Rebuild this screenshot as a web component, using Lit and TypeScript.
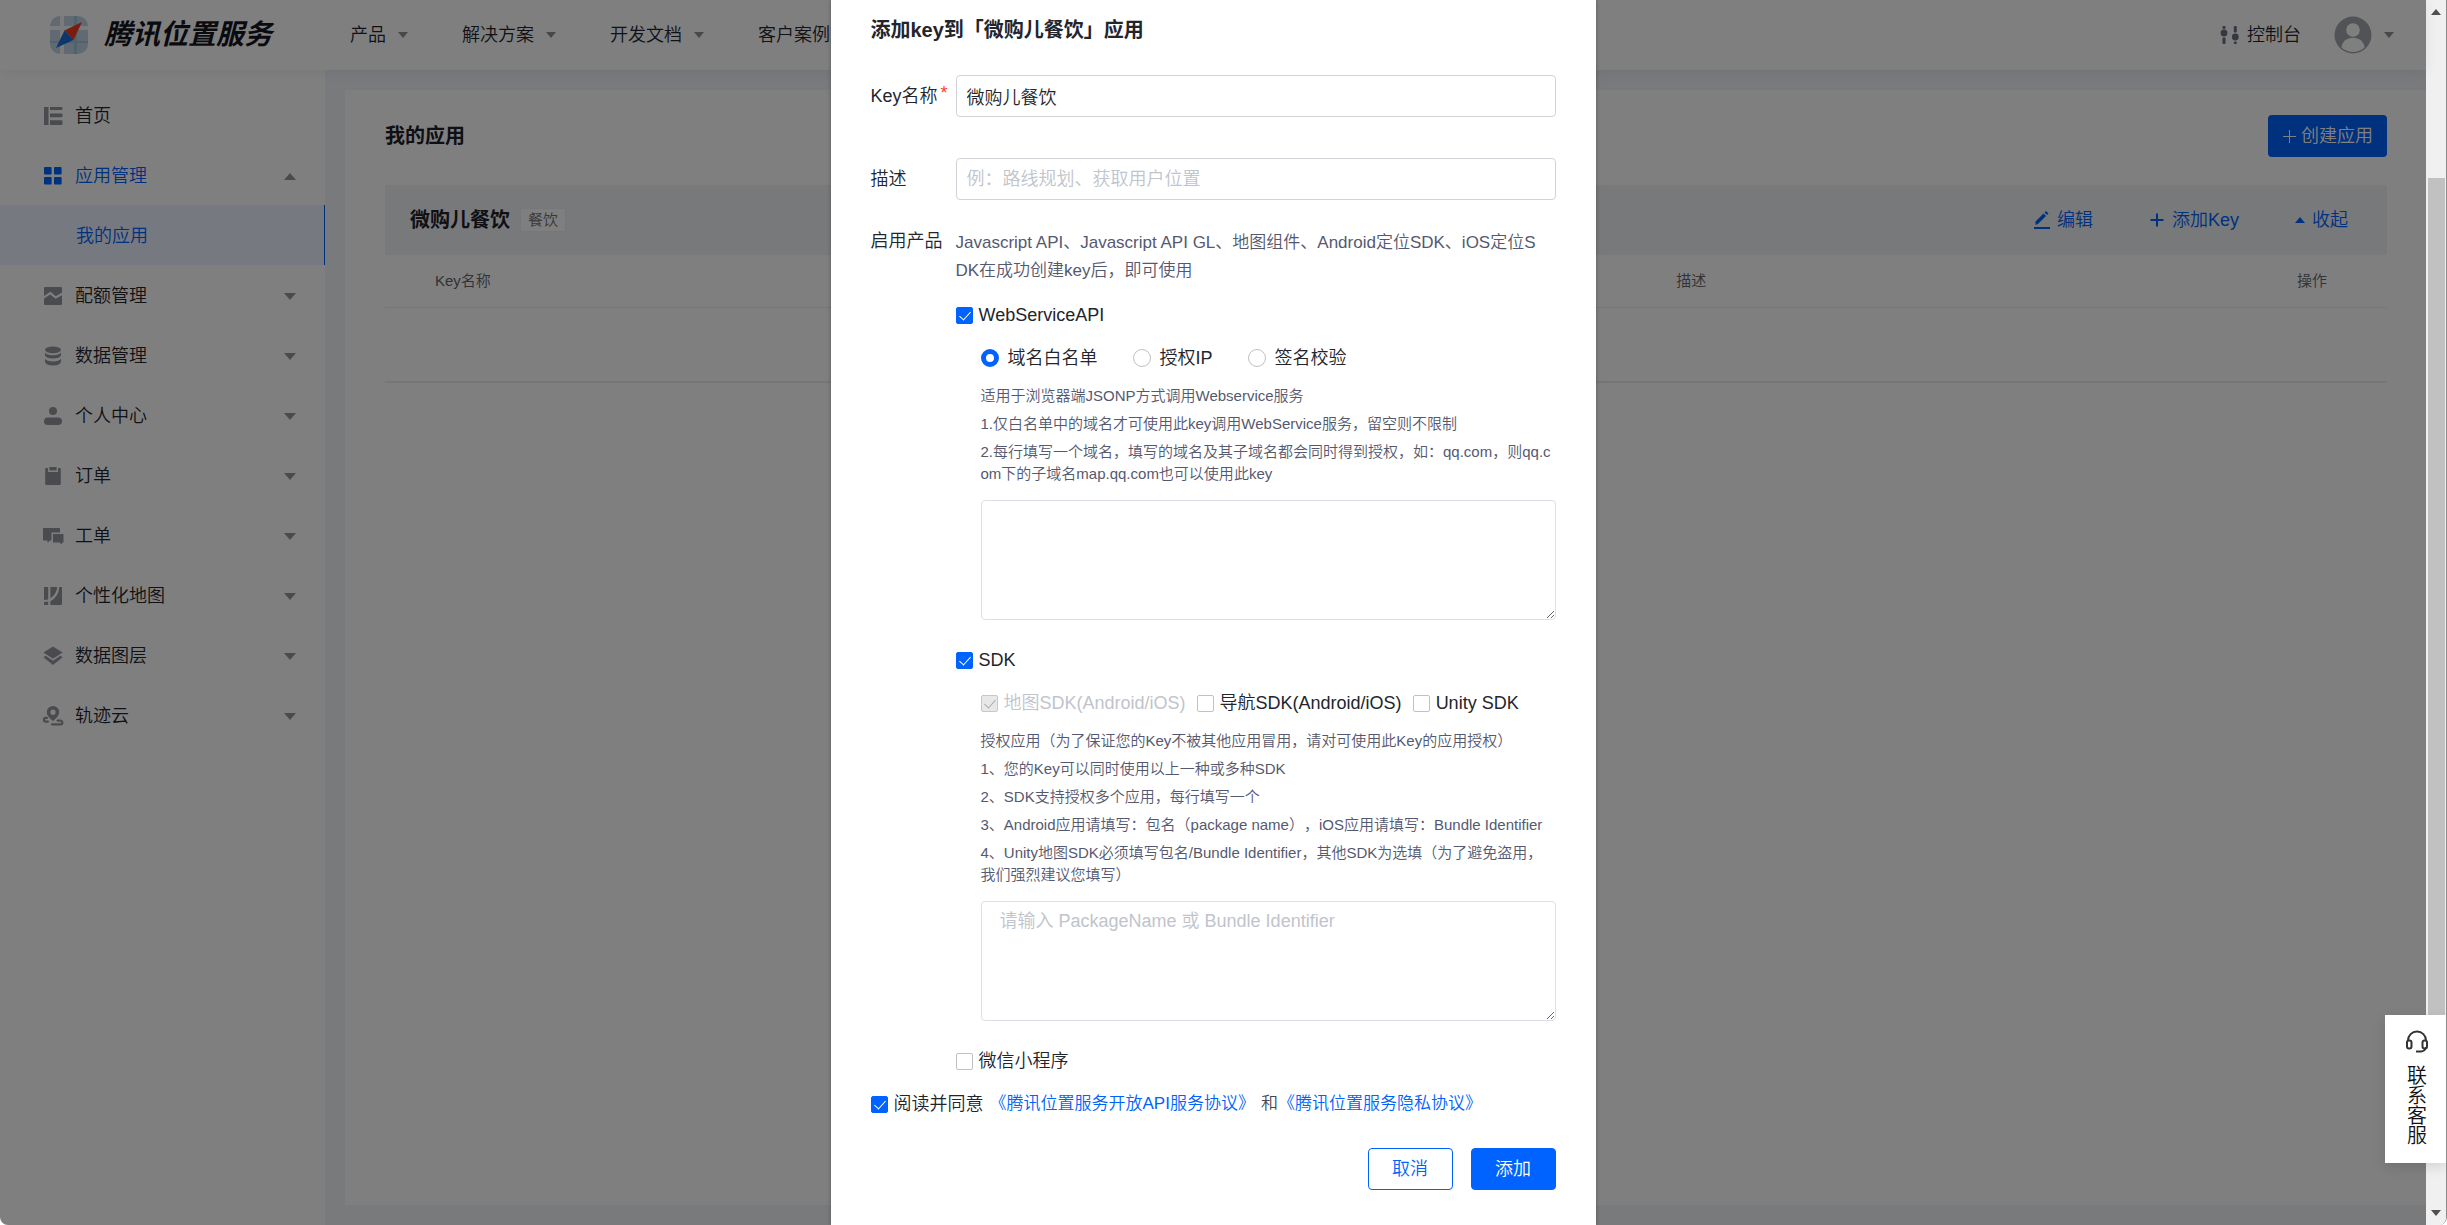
import { LitElement, html, css, svg, nothing } from "lit";
import { customElement, property, state } from "lit/decorators.js";
import { classMap } from "lit/directives/class-map.js";

const base = css`
  * {
    box-sizing: border-box;
  }
  a {
    color: inherit;
    text-decoration: none;
  }
  button {
    font: inherit;
    cursor: pointer;
  }
  .caret {
    width: 0;
    height: 0;
    flex: none;
    border: 6px solid transparent;
    border-top: 7px solid currentColor;
    border-bottom: 0;
  }
  .caret.small {
    border-width: 5px;
    border-top-width: 6px;
    border-bottom-width: 0;
  }
  .caret.up {
    border-top-width: 0;
    border-bottom: 7px solid currentColor;
  }
  .caret.small.up {
    border-bottom-width: 6px;
  }
`;

const icons = {
  home: svg`<path d="M1 1h4.5v18H1zM7 1h11.5q1 0 1 1v1q0 1-1 1H7zM7 7.6h11.5q1 0 1 1v1.6q0 1-1 1H7zM7 14.2h11.5q1 0 1 1V18q0 1-1 1H7z"/>`,
  apps: svg`<rect x="1" y="1" width="7.6" height="7.6" rx="1"/><rect x="11" y="1" width="7.6" height="7.6" rx="1"/><rect x="1" y="11" width="7.6" height="7.6" rx="1"/><rect x="11" y="11" width="7.6" height="7.6" rx="1"/>`,
  quota: svg`<path d="M2 1h16q1 0 1 1v4.600l-6.200 3.600-5.400-4.400L1 10V2q0-1 1-1zM19 9.200V18q0 1-1 1H2q-1 0-1-1v-5.600l6.200-4 5.400 4.400z"/>`,
  data: svg`<ellipse cx="10" cy="3.800" rx="8" ry="3.400"/><path d="M2 6.600q2 2.600 8 2.600t8-2.600V9.600q-1.400 3-8 3t-8-3zM2 12.800q2 2.600 8 2.600t8-2.600v3.200q-1.400 3.600-8 3.600t-8-3.600z"/>`,
  user: svg`<circle cx="10" cy="5" r="4"/><rect x="1" y="11.400" width="18" height="7.600" rx="3.800"/>`,
  order: svg`<path d="M3.200 2H5v4h10V2h1.800q1 0 1 1v15q0 1-1 1H3.200q-1 0-1-1V3q0-1 1-1z"/><rect x="6.400" y="1" width="7.200" height="3.400"/>`,
  ticket: svg`<path d="M0 2h16q1 0 1 1v3.500H8.500v8H7L4.500 17v-2.500H1q-1 0-1-1z"/><path d="M10 8h10.500v8.500H19V18.500l-2.500-2H10z"/>`,
  map: svg`<path d="M1 1h4.200v12.600L1 14zM1 16l4.200-.6V19H1zM7.400 1h6.800q-.4 7-6.800 11.200zM16.200 1H19v17q0 1-1 1H7.400v-3.800Q15.800 10.800 16.200 1z"/>`,
  layers: svg`<path d="M10 .600 19.600 6.600 10 12.800.400 6.600z"/><path d="M.400 11.200 2.600 9.800 10 14.800l7.400-5 2.200 1.400L10 19z"/>`,
  track: svg`<path fill-rule="evenodd" d="M10 0a6.200 6.200 0 0 1 6.200 6.200C16.200 10 12.600 12.600 10 15 7.400 12.600 3.800 10 3.800 6.200A6.200 6.200 0 0 1 10 0zm0 3.600a2.600 2.600 0 1 0 0 5.200 2.600 2.600 0 0 0 0-5.200z"/><path d="M4 11.800H2.800a1.800 1.800 0 0 0 0 3.800H5M14.500 14.600h3a1.800 1.800 0 0 1 0 3.800H9" fill="none" stroke="currentColor" stroke-width="2.200" stroke-linecap="round"/>`,
};

type IconName = keyof typeof icons;

interface MenuItem {
  icon: IconName;
  label: string;
  open?: boolean;
  children?: string[];
}

const MENU: MenuItem[] = [
  { icon: "home", label: "首页" },
  { icon: "apps", label: "应用管理", open: true, children: ["我的应用"] },
  { icon: "quota", label: "配额管理", children: [] },
  { icon: "data", label: "数据管理", children: [] },
  { icon: "user", label: "个人中心", children: [] },
  { icon: "order", label: "订单", children: [] },
  { icon: "ticket", label: "工单", children: [] },
  { icon: "map", label: "个性化地图", children: [] },
  { icon: "layers", label: "数据图层", children: [] },
  { icon: "track", label: "轨迹云", children: [] },
];

@customElement("site-header")
export class SiteHeader extends LitElement {
  static styles = [
    base,
    css`
      :host {
        display: block;
        position: relative;
        z-index: 1;
        background: #fff;
        box-shadow: 0 2px 12px rgba(30, 50, 90, 0.08);
      }
      .bar {
        display: flex;
        align-items: center;
        height: 70px;
        padding: 0 32px 0 50px;
      }
      .brand {
        display: flex;
        align-items: center;
        gap: 16px;
        margin-right: 78px;
        font-size: 28px;
        line-height: 40px;
        font-weight: 700;
        font-style: italic;
        color: #14161f;
        white-space: nowrap;
      }
      .brand svg {
        display: block;
        width: 38px;
        height: 38px;
      }
      nav {
        display: flex;
        gap: 54px;
        flex: 1;
      }
      nav a,
      .console,
      .account {
        display: flex;
        align-items: center;
        gap: 12px;
        white-space: nowrap;
      }
      .caret {
        color: #8d9097;
      }
      .console {
        gap: 7px;
      }
      .console svg {
        width: 20px;
        height: 20px;
        color: #6c7183;
      }
      .account {
        margin-left: 33px;
        padding: 0;
        border: 0;
        background: none;
      }
      .account svg {
        width: 38px;
        height: 38px;
      }
    `,
  ];

  render() {
    return html`
      <header class="bar">
        <a class="brand" href="#home">
          <svg viewBox="0 0 38 38" aria-hidden="true">
            <rect width="38" height="38" rx="10" fill="#c3d5e6" />
            <path d="M10 0h4v38h-4zM0 10h38v4H0z" fill="#f3f7fb" />
            <path d="M24 0h3v38h-3zM0 25h38v2H0z" fill="#9ec4da" />
            <path d="M32 6 23.500 24 14.500 14.500z" fill="#f43a1c" />
            <path d="M6 32 14.500 14.500 23.500 24z" fill="#1b6fd8" />
          </svg>
          腾讯位置服务
        </a>
        <nav>
          ${["产品", "解决方案", "开发文档"].map(
            (t) => html`<a href="#nav">${t}<span class="caret small"></span></a>`
          )}
          <a href="#nav">客户案例</a>
        </nav>
        <a class="console" href="#console">
          <svg viewBox="0 0 20 20" fill="currentColor" aria-hidden="true">
            <rect x="2.500" y="1" width="3" height="3" rx="1" /><circle cx="4" cy="8" r="3.400" /><rect x="2.500" y="12.500" width="3" height="6.500" rx="1" />
            <rect x="13.800" y="1" width="3" height="6.500" rx="1" /><circle cx="15.300" cy="12" r="3.400" /><rect x="13.800" y="16.500" width="3" height="2.500" rx="1" />
          </svg>
          控制台
        </a>
        <button class="account" aria-label="账号">
          <svg viewBox="0 0 38 38" aria-hidden="true">
            <circle cx="19" cy="19" r="18.500" fill="#a5a7ad" />
            <circle cx="19" cy="14" r="6.800" fill="#fff" />
            <path d="M7.500 31.500C8 25.500 13 21.800 19 21.800s11 3.700 11.500 9.700A17 17 0 0 1 19 36 17 17 0 0 1 7.500 31.500z" fill="#fff" />
          </svg>
          <span class="caret small"></span>
        </button>
      </header>
    `;
  }
}

@customElement("side-menu")
export class SideMenu extends LitElement {
  static styles = [
    base,
    css`
      :host {
        display: block;
        width: 325px;
        flex: none;
        padding-top: 15px;
        background: #fff;
      }
      ul {
        margin: 0;
        padding: 0;
        list-style: none;
      }
      a {
        display: flex;
        align-items: center;
        height: 60px;
        padding: 2px 29px 0 43px;
      }
      a svg {
        width: 20px;
        height: 20px;
        margin-right: 12px;
        color: #95979d;
        overflow: visible;
      }
      a .text {
        flex: 1;
      }
      .caret {
        color: #95979d;
      }
      .open,
      .open svg {
        color: #0062ff;
      }
      .sub a {
        padding-left: 76px;
        background: #edf2ff;
        color: #0062ff;
        border-right: 1px solid #0062ff;
      }
    `,
  ];

  render() {
    return html`<nav>
      <ul>
        ${MENU.map(
          (m) => html`<li>
            <a href="#menu" class=${classMap({ open: !!m.open })}>
              <svg viewBox="0 0 20 20" fill="currentColor" aria-hidden="true">${icons[m.icon]}</svg>
              <span class="text">${m.label}</span>
              ${m.children
                ? html`<span class=${classMap({ caret: true, up: !!m.open })}></span>`
                : nothing}
            </a>
            ${m.open
              ? html`<ul class="sub">
                  ${m.children!.map((c) => html`<li><a href="#apps">${c}</a></li>`)}
                </ul>`
              : nothing}
          </li>`
        )}
      </ul>
    </nav>`;
  }
}

@customElement("app-list")
export class AppList extends LitElement {
  static styles = [
    base,
    css`
      :host {
        display: block;
        flex: 1;
        min-width: 0;
        padding: 25px 39px 25px 40px;
        background: #fff;
      }
      .head,
      .app,
      .actions,
      .actions button {
        display: flex;
        align-items: center;
      }
      .head {
        justify-content: space-between;
        margin-bottom: 28px;
      }
      h1,
      h2 {
        margin: 0;
        font-size: 20px;
        line-height: 30px;
        color: #1d2129;
      }
      .create {
        display: flex;
        align-items: center;
        gap: 4px;
        height: 42px;
        padding: 0 14px;
        border: 0;
        border-radius: 4px;
        background: #0062ff;
        color: #fff;
      }
      .create svg {
        width: 15px;
        height: 15px;
      }
      .app {
        height: 70px;
        padding: 0 39px 0 25px;
        background: #f1f3f7;
      }
      .tag {
        margin-left: 10px;
        padding: 0 7px;
        border: 1px solid #eeeff2;
        border-radius: 3px;
        background: #fff;
        font-size: 15px;
        line-height: 22px;
        color: #6e7178;
      }
      .actions {
        gap: 56px;
        margin-left: auto;
        color: #0062ff;
      }
      .actions button {
        gap: 7px;
        padding: 0;
        border: 0;
        background: none;
        color: inherit;
      }
      .actions svg {
        width: 16px;
        height: 18px;
      }
      table {
        width: 100%;
        table-layout: fixed;
        border-collapse: separate;
        border-spacing: 0;
      }
      th {
        height: 53px;
        padding: 0 0 0 50px;
        border-bottom: 1px solid #ebedf2;
        font-size: 15px;
        font-weight: inherit;
        text-align: left;
        color: #62656d;
      }
      td {
        height: 75px;
        padding: 0;
        border-bottom: 2px solid #ebedf3;
      }
      .name {
        width: 62%;
      }
      .ops {
        width: 140px;
      }
    `,
  ];

  render() {
    return html`
      <div class="head">
        <h1>我的应用</h1>
        <button class="create">
          <svg viewBox="0 0 15 15" stroke="currentColor" aria-hidden="true"><path d="M7.500 1v13M1 7.500h13" /></svg>
          创建应用
        </button>
      </div>
      <section>
        <div class="app">
          <h2>微购儿餐饮</h2>
          <span class="tag">餐饮</span>
          <div class="actions">
            <button>
              <svg viewBox="0 0 16 18" fill="currentColor" aria-hidden="true">
                <path d="M1.500 14v-3.500L9.500 2.500 12 5 4 13zM10.500 1.500 12 0l2.500 2.500L13 4zM0 16h16v2H0z" />
              </svg>
              编辑
            </button>
            <button>
              <svg viewBox="0 0 16 18" stroke="currentColor" stroke-width="2" aria-hidden="true"><path d="M8 2.500v13M1.500 9h13" /></svg>
              添加Key
            </button>
            <button><span class="caret small up"></span>收起</button>
          </div>
        </div>
        <table>
          <thead>
            <tr>
              <th class="name">Key名称</th>
              <th>描述</th>
              <th class="ops">操作</th>
            </tr>
          </thead>
          <tbody>
            <tr>
              <td colspan="3"></td>
            </tr>
          </tbody>
        </table>
      </section>
    `;
  }
}

@customElement("tick-box")
export class TickBox extends LitElement {
  @property() label = "";
  @property({ type: Boolean }) checked = false;
  @property({ type: Boolean }) disabled = false;

  static styles = [
    base,
    css`
      :host {
        display: flex;
      }
      label {
        display: flex;
        align-items: center;
        gap: 6px;
        line-height: 28px;
        white-space: nowrap;
        color: #22252c;
      }
      input {
        appearance: none;
        position: relative;
        flex: none;
        width: 17px;
        height: 17px;
        margin: 0;
        border: 1px solid #bfc1c7;
        border-radius: 2px;
        background: #fff;
      }
      input:checked {
        border-color: #0062ff;
        background: #0062ff;
        color: #fff;
      }
      input:checked::after {
        content: "";
        position: absolute;
        left: 5px;
        top: 1px;
        width: 5px;
        height: 10px;
        border: solid currentColor;
        border-width: 0 1px 1px 0;
        transform: rotate(42deg);
      }
      input:disabled {
        border-color: #c8c8c8;
        background: #e8e8e8;
        color: #a9abb0;
      }
      input:disabled + span {
        color: #c0c4cc;
      }
    `,
  ];

  render() {
    return html`<label>
      <input
        type="checkbox"
        .checked=${this.checked}
        ?disabled=${this.disabled}
        @change=${(e: Event) => (this.checked = (e.target as HTMLInputElement).checked)}
      />
      <span>${this.label}</span>
    </label>`;
  }
}

@customElement("key-dialog")
export class KeyDialog extends LitElement {
  @state() private mode = "域名白名单";

  static styles = [
    base,
    css`
      :host {
        display: block;
        width: 765px;
        max-width: 100%;
        padding: 10px 40px 32px;
        background: #fff;
        box-shadow: 0 0 4px rgba(0, 0, 0, 0.3);
        color: #22252c;
      }
      h2 {
        margin: 0 0 25px;
        font-size: 20px;
        line-height: 40px;
      }
      .row {
        display: grid;
        grid-template-columns: 85px 1fr;
        align-items: center;
        margin-bottom: 41px;
      }
      .row.products {
        align-items: start;
        margin: -12px 0 15px;
      }
      .label {
        display: flex;
        line-height: 24px;
        white-space: nowrap;
      }
      .star {
        margin-left: 3px;
        line-height: 18px;
        color: #ff3b30;
      }
      input[type="text"],
      textarea {
        display: block;
        width: 100%;
        font: inherit;
        color: #22252c;
        border: 1px solid #d0d2d8;
        border-radius: 4px;
        outline: none;
      }
      input[type="text"] {
        height: 42px;
        padding: 0 10px;
      }
      textarea {
        height: 120px;
        padding: 6px 18px;
        line-height: 26px;
        border-color: #dcdee8;
        resize: vertical;
      }
      ::placeholder {
        color: #c0c4cc;
        opacity: 1;
      }
      .intro {
        margin: 0 0 16px;
        font-size: 17px;
        line-height: 28px;
        color: #555970;
      }
      .group {
        margin: 15px 0 26px;
        padding-left: 25px;
      }
      .options {
        display: flex;
        height: 28px;
        margin-bottom: 13px;
      }
      .radios {
        gap: 35px;
      }
      .boxes {
        gap: 11px;
      }
      .radios label {
        display: flex;
        align-items: center;
        gap: 9px;
        white-space: nowrap;
      }
      .radios input {
        appearance: none;
        width: 18px;
        height: 18px;
        margin: 0;
        border: 1px solid #bfc1c7;
        border-radius: 50%;
      }
      .radios input:checked {
        border: 5px solid #0062ff;
      }
      .note {
        margin: 0 0 6px;
        font-size: 15px;
        line-height: 22px;
        word-break: break-all;
        color: #555970;
      }
      .note:last-of-type {
        margin-bottom: 15px;
      }
      .agree {
        display: flex;
        align-items: center;
        gap: 6px;
        line-height: 28px;
        color: #44474f;
        white-space: nowrap;
      }
      .terms {
        font-size: 17px;
      }
      .agree a {
        color: #0062ff;
      }
      .buttons {
        display: flex;
        justify-content: flex-end;
        gap: 18px;
        margin-top: 30px;
      }
      .buttons button {
        width: 85px;
        height: 42px;
        padding: 0;
        border: 1px solid #0062ff;
        border-radius: 4px;
        background: #fff;
        color: #0062ff;
      }
      .buttons .primary {
        background: #0062ff;
        color: #fff;
      }
    `,
  ];

  render() {
    return html`
      <form role="dialog" aria-labelledby="title" @submit=${(e: Event) => e.preventDefault()}>
        <h2 id="title">添加key到「微购儿餐饮」应用</h2>
        <div class="row">
          <label class="label" for="name">Key名称<span class="star">*</span></label>
          <input id="name" type="text" value="微购儿餐饮" />
        </div>
        <div class="row">
          <label class="label" for="desc">描述</label>
          <input id="desc" type="text" placeholder="例：路线规划、获取用户位置" />
        </div>
        <div class="row products">
          <span class="label">启用产品</span>
          <div>
            <p class="intro">
              Javascript API、Javascript API GL、地图组件、Android定位SDK、iOS定位S<br />DK在成功创建key后，即可使用
            </p>
            <tick-box label="WebServiceAPI" checked></tick-box>
            <div class="group">
              <div class="options radios">
                ${["域名白名单", "授权IP", "签名校验"].map(
                  (m) => html`<label>
                    <input
                      type="radio"
                      name="mode"
                      .checked=${this.mode === m}
                      @change=${() => (this.mode = m)}
                    />${m}
                  </label>`
                )}
              </div>
              <p class="note">适用于浏览器端JSONP方式调用Webservice服务</p>
              <p class="note">1.仅白名单中的域名才可使用此key调用WebService服务，留空则不限制</p>
              <p class="note">
                2.每行填写一个域名，填写的域名及其子域名都会同时得到授权，如：qq.com，则qq.com下的子域名map.qq.com也可以使用此key
              </p>
              <textarea aria-label="域名白名单"></textarea>
            </div>
            <tick-box label="SDK" checked></tick-box>
            <div class="group">
              <div class="options boxes">
                <tick-box label="地图SDK(Android/iOS)" checked disabled></tick-box>
                <tick-box label="导航SDK(Android/iOS)"></tick-box>
                <tick-box label="Unity SDK"></tick-box>
              </div>
              <p class="note">授权应用（为了保证您的Key不被其他应用冒用，请对可使用此Key的应用授权）</p>
              <p class="note">1、您的Key可以同时使用以上一种或多种SDK</p>
              <p class="note">2、SDK支持授权多个应用，每行填写一个</p>
              <p class="note">3、Android应用请填写：包名（package name），iOS应用请填写：Bundle Identifier</p>
              <p class="note">
                4、Unity地图SDK必须填写包名/Bundle Identifier，其他SDK为选填（为了避免盗用，我们强烈建议您填写）
              </p>
              <textarea aria-label="授权应用" placeholder="请输入 PackageName 或 Bundle Identifier"></textarea>
            </div>
            <tick-box label="微信小程序"></tick-box>
          </div>
        </div>
        <div class="agree">
          <tick-box label="阅读并同意" checked></tick-box>
          <a class="terms" href="#terms">《腾讯位置服务开放API服务协议》</a>
          <span class="terms">和<a href="#privacy">《腾讯位置服务隐私协议》</a></span>
        </div>
        <div class="buttons">
          <button type="button">取消</button>
          <button type="submit" class="primary">添加</button>
        </div>
      </form>
    `;
  }
}

@customElement("app-root")
export class AppRoot extends LitElement {
  static styles = [
    base,
    css`
      :host {
        display: flex;
        position: relative;
        min-height: 100vh;
        overflow: hidden;
        box-sizing: border-box;
        border-right: 1px solid #8a8a8a;
        border-radius: 0 0 8px 8px;
        font-family: "Liberation Sans", "Noto Sans CJK SC", sans-serif;
        font-size: 18px;
        font-weight: 350;
        line-height: 28px;
        text-spacing-trim: space-all;
        color: #22252c;
      }
      .page {
        display: grid;
        flex: 1;
        min-width: 0;
      }
      .console,
      .overlay {
        grid-area: 1 / 1;
        min-width: 0;
      }
      .console {
        display: flex;
        flex-direction: column;
        background: #f2f4f9;
      }
      .body {
        display: flex;
        flex: 1;
      }
      .content {
        display: flex;
        flex: 1;
        min-width: 0;
        padding: 20px 0 20px 20px;
      }
      .overlay {
        display: flex;
        justify-content: center;
        z-index: 2;
        background: rgba(0, 0, 0, 0.5);
      }
      .scroll {
        display: flex;
        flex-direction: column;
        align-items: center;
        width: 20px;
        padding: 9px 0;
        background: #f0f0f0;
        color: #505050;
      }
      .thumb {
        flex: 1;
        width: 17px;
        margin: 163px 0 180px;
        background: #c1c1c1;
      }
      .support {
        position: absolute;
        right: 0;
        bottom: 62px;
        z-index: 3;
        display: flex;
        flex-direction: column;
        align-items: center;
        gap: 12px;
        width: 61px;
        height: 148px;
        padding: 15px 0 0 3px;
        border: 0;
        background: #fff;
        box-shadow: 0 4px 12px rgba(0, 0, 0, 0.12);
        font-size: 20px;
        line-height: 20px;
        color: #111;
      }
      .support svg {
        width: 24px;
        height: 24px;
      }
      .support span {
        width: 20px;
      }
    `,
  ];

  render() {
    return html`
      <div class="page">
        <div class="console">
          <site-header></site-header>
          <div class="body">
            <side-menu></side-menu>
            <main class="content"><app-list></app-list></main>
          </div>
        </div>
        <div class="overlay"><key-dialog></key-dialog></div>
      </div>
      <div class="scroll" aria-hidden="true">
        <span class="caret small up"></span>
        <span class="thumb"></span>
        <span class="caret small"></span>
      </div>
      <button class="support">
        <svg viewBox="0 0 24 24" fill="none" stroke="#333" stroke-width="2" aria-hidden="true">
          <path d="M3 11v-.500a9 9 0 0 1 18 0v.500M21 17q-.500 4-5 4.500h-5" />
          <rect x="2" y="10.500" width="4.500" height="8" rx="2" />
          <rect x="17.500" y="10.500" width="4.500" height="8" rx="2" />
        </svg>
        <span>联系客服</span>
      </button>
    `;
  }
}
